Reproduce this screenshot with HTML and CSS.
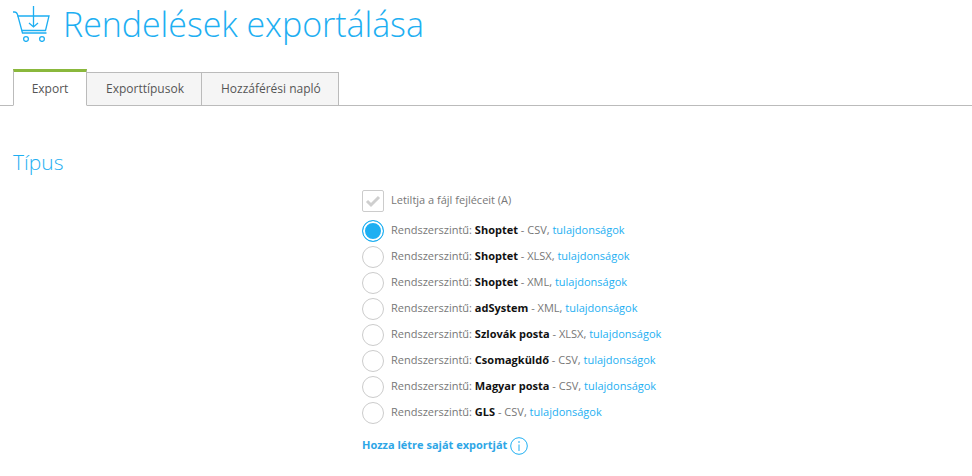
FILE: index.html
```html
<!DOCTYPE html>
<html lang="hu">
<head>
<meta charset="utf-8">
<title>Rendelések exportálása</title>
<link rel="stylesheet" href="styles.css">
</head>
<body>
<header class="page-head">
  <svg class="cart" width="38" height="42" viewBox="0 0 38 42" fill="none" stroke="#1eaff2" stroke-width="1.300">
    <path d="M0 12h1.500c1.500 0 2.500 1 3 2.500L9.500 33h24"/>
    <path d="M4.500 16H36l-3.500 14.500H8.500"/>
    <circle cx="13" cy="39" r="2.400"/>
    <circle cx="29" cy="39" r="2.400"/>
    <path d="M20.500 6v21M16 23l4.500 4 4.500-4"/>
  </svg>
  <h1 class="title">Rendelések exportálása</h1>
</header>
<nav class="tabs">
  <a class="tab tab-active">Export</a>
  <a class="tab">Exporttípusok</a>
  <a class="tab">Hozzáférési napló</a>
</nav>
<h2 class="section">Típus</h2>
<form class="options">
  <div class="row check-row">
    <span class="checkbox">
      <svg width="16" height="14" viewBox="0 0 16 14" fill="none" stroke="#cfcfcf" stroke-width="3"><path d="M2 7l4 4 8-8"/></svg>
    </span>
    <span class="label">Letiltja a fájl fejléceit (A)</span>
  </div>
  <div class="row"><span class="radio radio-on"></span><span class="label">Rendszerszintű: <b>Shoptet</b> - CSV, <a class="link">tulajdonságok</a></span></div>
  <div class="row"><span class="radio"></span><span class="label">Rendszerszintű: <b>Shoptet</b> - XLSX, <a class="link">tulajdonságok</a></span></div>
  <div class="row"><span class="radio"></span><span class="label">Rendszerszintű: <b>Shoptet</b> - XML, <a class="link">tulajdonságok</a></span></div>
  <div class="row"><span class="radio"></span><span class="label">Rendszerszintű: <b>adSystem</b> - XML, <a class="link">tulajdonságok</a></span></div>
  <div class="row"><span class="radio"></span><span class="label">Rendszerszintű: <b>Szlovák posta</b> - XLSX, <a class="link">tulajdonságok</a></span></div>
  <div class="row"><span class="radio"></span><span class="label">Rendszerszintű: <b>Csomagküldő</b> - CSV, <a class="link">tulajdonságok</a></span></div>
  <div class="row"><span class="radio"></span><span class="label">Rendszerszintű: <b>Magyar posta</b> - CSV, <a class="link">tulajdonságok</a></span></div>
  <div class="row"><span class="radio"></span><span class="label">Rendszerszintű: <b>GLS</b> - CSV, <a class="link">tulajdonságok</a></span></div>
  <div class="own">
    <a class="own-link">Hozza létre saját exportját</a>
    <svg class="info" width="18" height="18" viewBox="0 0 18 18" fill="none" stroke="#1eaff2"><circle cx="9" cy="9" r="8.300"/><path d="M9 7.500v6.500M9 4v2"/></svg>
  </div>
</form>
</body>
</html>
```
FILE: styles.css
```css
html, body { margin: 0; padding: 0; background: #fff; }
body {
  width: 972px;
  height: 476px;
  overflow: hidden;
  font-family: "Open Sans", sans-serif;
  font-size: 11px;
  color: #777;
}
.page-head {
  display: flex;
  align-items: flex-start;
  height: 69px;
  padding-left: 13px;
}
.cart { flex: none; }
.title {
  margin: 0 0 0 12px;
  font-size: 34px;
  font-weight: 300;
  line-height: 48px;
  letter-spacing: -0.05px;
  color: #1eaff2;
}
.tabs {
  display: flex;
  align-items: flex-end;
  height: 36px;
  padding-left: 13px;
  border-bottom: 1px solid #bbb;
}
.tab {
  box-sizing: border-box;
  height: 34px;
  margin-bottom: -1px;
  padding: 0 17px 0 19px;
  line-height: 31px;
  font-size: 12px;
  color: #555;
  background: #f5f5f5;
  border: 1px solid #bbb;
  border-left: 0;
}
.tab-active {
  width: 74px;
  height: 37px;
  padding: 1px 0 0;
  text-align: center;
  background: #fff;
  border-top: 3px solid #8ab83c;
  border-left: 1px solid #bbb;
  border-bottom: 1px solid #fff;
}
.section {
  margin: 43px 0 0 13px;
  font-size: 21px;
  font-weight: 300;
  line-height: 27px;
  color: #1eaff2;
}
.options {
  display: flex;
  flex-direction: column;
  margin: 14px 0 0 362px;
}
.row {
  display: flex;
  align-items: center;
  gap: 7px;
  height: 26px;
  white-space: pre-wrap;
}
.label { margin-bottom: 4px; }
.check-row { height: 22px; margin-bottom: 6px; }
.row b { color: #111; font-weight: 700; }
.link { color: #1eaff2; }
.checkbox {
  box-sizing: border-box;
  display: flex;
  align-items: center;
  justify-content: center;
  width: 22px;
  height: 22px;
  border: 1px solid #ccc;
  border-radius: 2px;
}
.radio {
  box-sizing: border-box;
  flex: none;
  width: 22px;
  height: 22px;
  border: 1px solid #ccc;
  border-radius: 50%;
}
.radio-on {
  border-color: #1eaff2;
  background: #1eaff2;
  box-shadow: inset 0 0 0 2px #fff;
}
.own {
  display: flex;
  align-items: center;
  gap: 3px;
  margin-top: 10px;
  height: 20px;
}
.own-link { margin-bottom: 4px; color: #2ea6e6; font-weight: 700; }
.info { flex: none; }
```
